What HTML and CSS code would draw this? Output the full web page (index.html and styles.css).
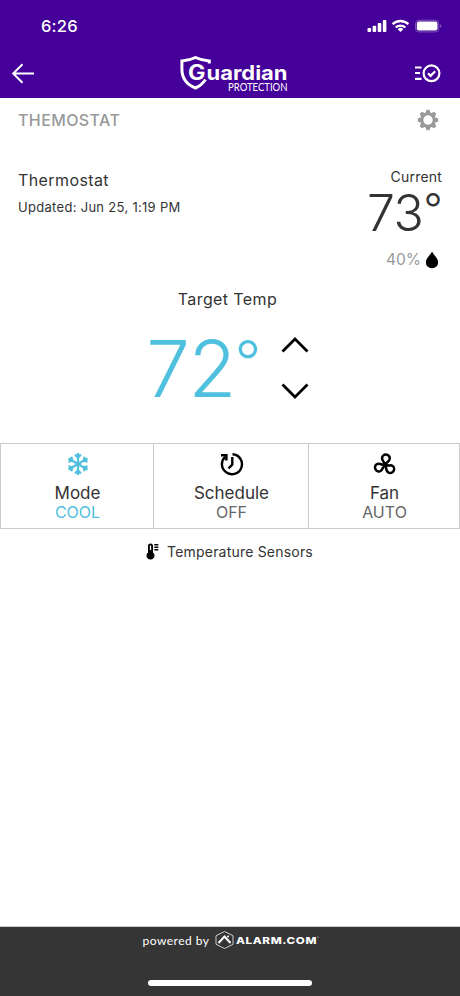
FILE: index.html
```
<!DOCTYPE html>
<html lang="en">

<head>
    <meta charset="UTF-8">
    <meta name="viewport" content="width=device-width, initial-scale=1.0">
    <title>Thermostat</title>
    <link rel="stylesheet" href="styles.css">
</head>

<body>
    <header>
        <div class="status">
            <span class="time">6:26</span>
            <svg class="signals" width="75" height="16" viewBox="0 0 75 16" fill="#fff">
                <rect x="0.5" y="10" width="3.6" height="4" rx="1"/>
                <rect x="5.6" y="7.8" width="3.6" height="6.2" rx="1"/>
                <rect x="10.7" y="5" width="3.6" height="9" rx="1"/>
                <rect x="15.8" y="2" width="3.6" height="12" rx="1"/>
                <g fill="none" stroke="#fff" stroke-width="2.3">
                    <path d="M25.6 6.2a11.4 11.4 0 0 1 15.8 0"/>
                    <path d="M28.6 9.5a7.2 7.2 0 0 1 9.8 0"/>
                </g>
                <path d="M33.5 14l-2.8-2.8a4 4 0 0 1 5.6 0z"/>
                <rect x="48.5" y="2.2" width="23.3" height="11.7" rx="3.5" fill="none" stroke="#7f55bb"/>
                <rect x="49.8" y="3.6" width="20.7" height="8.9" rx="2.2"/>
                <path d="M73 6.2c1.8.6 1.8 3.2 0 3.8z" fill="#7f55bb"/>
            </svg>
        </div>
        <nav>
            <svg width="24" height="24" viewBox="0 0 24 24" fill="none" stroke="#fff" stroke-width="2">
                <path d="M23 12.5H2M11.5 3.2L2.2 12.5l9.3 9.3"/>
            </svg>
            <svg class="logo" width="110" height="38" viewBox="0 0 110 38">
                <path d="M30.300 9.500V7Q22.500 6.400 16.500 3.500Q10.500 6.400 2.900 7V15C2.900 24 7.500 30.500 16.500 34Q22.500 31.500 26.500 25.500" fill="none" stroke="#fff" stroke-width="3"/>
                <text class="logo-g" x="9" y="25.500" textLength="17.500" lengthAdjust="spacingAndGlyphs">G</text>
                <text class="logo-name" x="27.500" y="25.500" textLength="81" lengthAdjust="spacingAndGlyphs">uardian</text>
                <text class="logo-sub" x="49" y="36.500" textLength="59.500" lengthAdjust="spacingAndGlyphs">PROTECTION</text>
            </svg>
            <svg width="26" height="20" viewBox="0 0 26 20" fill="none" stroke="#fff" stroke-width="2.200">
                <path d="M0 4.500h6.500M0 10h5M0 15.800h6.500"/>
                <circle cx="16.500" cy="10.300" r="7.900"/>
                <path d="M13 10.300l2.600 2.600 4.600-4.600"/>
            </svg>
        </nav>
    </header>

    <main>
        <div class="title-row">
            <h1>THEMOSTAT</h1>
            <svg width="22" height="22" viewBox="-11 -11 22 22">
                <g fill="#999">
                    <g id="teeth">
                        <path id="tooth" d="M-2.600-7L-1.400-10.200H1.400L2.600-7V7L1.400 10.200H-1.400L-2.600 7z"/>
                        <use href="#tooth" transform="rotate(45)"/>
                    </g>
                    <use href="#teeth" transform="rotate(90)"/>
                    <circle r="7.800"/>
                </g>
                <circle r="4.700" fill="#fff"/>
            </svg>
        </div>

        <section class="summary">
            <div class="device">
                <h2>Thermostat</h2>
                <p>Updated: Jun 25, 1:19 PM</p>
            </div>
            <div class="current">
                <div class="label">Current</div>
                <div class="degrees">73<span class="deg">°</span></div>
                <div class="humidity">
                    <span>40%</span>
                    <svg width="14" height="18" viewBox="0 0 14 18">
                        <path d="M7 .5C8.500 4 13.200 7.200 13.200 11.300a6.200 6 0 0 1-12.400 0C.8 7.200 5.500 4 7 .5z"/>
                    </svg>
                </div>
            </div>
        </section>

        <section class="target">
            <h2>Target Temp</h2>
            <div class="setpoint">
                <span class="value">72<span class="deg">°</span></span>
                <svg width="28" height="64" viewBox="0 0 28 64" fill="none" stroke="#000" stroke-width="2.800">
                    <path d="M1.500 15.500L14 3l12.500 12.500M1.500 48.500L14 61l12.500-12.500"/>
                </svg>
            </div>
        </section>

        <section class="controls">
            <div class="control cool">
                <svg width="24" height="24" viewBox="-12 -12 24 24" fill="none" stroke="#4fc0de" stroke-width="2.200">
                    <g id="arms">
                        <path id="arm" d="M0 0V-11M-2.900-9.400L0-6.500 2.900-9.400"/>
                        <use href="#arm" transform="rotate(60)"/>
                        <use href="#arm" transform="rotate(120)"/>
                    </g>
                    <use href="#arms" transform="rotate(180)"/>
                </svg>
                <h3>Mode</h3>
                <p>COOL</p>
            </div>
            <div class="control">
                <svg width="24" height="24" viewBox="0 0 24 24" fill="none" stroke="#000" stroke-width="2.400">
                    <path d="M12.500 2.200a10 10 0 1 1-7.300 2.600"/>
                    <path d="M1 3.200h5.400v5.400M12.300 5v7.500l-3.800 3.800"/>
                </svg>
                <h3>Schedule</h3>
                <p>OFF</p>
            </div>
            <div class="control">
                <svg width="24" height="24" viewBox="-12 -12 24 24" fill="none" stroke="#000" stroke-width="2.500">
                    <path id="blade" d="M-.5 1C1.500-1.500 4.800-2.600 4.800-5.600a3.900 3.700 0 0 0-7.800-.2c0 2.600 2.600 3 2.500 6.800z"/>
                    <use href="#blade" transform="rotate(120 0 1)"/>
                    <use href="#blade" transform="rotate(240 0 1)"/>
                </svg>
                <h3>Fan</h3>
                <p>AUTO</p>
            </div>
        </section>

        <div class="sensors">
            <svg width="13" height="18" viewBox="0 0 13 18">
                <path d="M2 4a2.500 2.500 0 0 1 5 0v6.500a4 4 0 1 1-5 0z"/>
                <path d="M4.500 3.500V8" stroke="#fff" stroke-width="1.300"/>
                <path d="M8.300 2.800h4M8.300 5.300h4M8.300 7.800h4" stroke="#000" stroke-width="1.500"/>
            </svg>
            <span>Temperature Sensors</span>
        </div>
    </main>

    <footer>
        <div class="powered">
            <span>powered by</span>
            <svg width="106" height="20" viewBox="0 0 106 20">
                <path d="M10.500 1.500l8.500 4.200v8.600l-8.500 4.200-8.500-4.200V5.700z" fill="none" stroke="#ccc"/>
                <path d="M4.500 13l6-6.500 6 6.500" fill="none" stroke="#fff" stroke-width="2"/>
                <circle cx="14" cy="6.600" r="1" fill="#fff"/>
                <text class="alarm" x="22" y="13.500" textLength="81" lengthAdjust="spacingAndGlyphs">ALARM.COM</text>
                <circle cx="104" cy="7" r=".6" fill="#ccc"/>
            </svg>
        </div>
        <div class="home-bar"></div>
    </footer>
</body>

</html>
```
FILE: styles.css
```
html,
body {
    margin: 0;
    padding: 0;
    height: 100%;
}

body {
    display: flex;
    flex-direction: column;
    background-color: #fff;
    color: #333;
    font-family: Inter, "Liberation Sans", sans-serif;
}

h1,
h2,
h3,
p {
    margin: 0;
    font-weight: normal;
}

svg {
    display: block;
    flex: none;
}

header {
    height: 98px;
    background-color: #440099;
    color: #fff;
}

.status {
    display: flex;
    justify-content: space-between;
    align-items: center;
    height: 52px;
    padding: 0 18px 0 41px;
}

.time {
    font-size: 16.5px;
    font-weight: 500;
    line-height: 20px;
    letter-spacing: 0.2px;
}

nav {
    display: flex;
    justify-content: space-between;
    align-items: center;
    height: 42px;
    padding: 0 19px 0 11px;
}

.logo {
    margin-left: 17px;
    overflow: visible;
}

.logo text {
    fill: #fff;
    font-family: Inter, sans-serif;
}

.logo .logo-g {
    font-size: 21px;
    font-weight: 700;
}

.logo .logo-name {
    font-size: 20px;
    font-weight: 700;
}

.logo .logo-sub {
    font-family: Lato, sans-serif;
    font-size: 10.5px;
}

main {
    flex: 1;
}

.title-row {
    display: flex;
    justify-content: space-between;
    align-items: center;
    height: 44px;
    padding: 0 21px 0 18px;
}

h1 {
    color: #999;
    font-size: 16px;
    font-weight: 500;
    letter-spacing: 0.4px;
}

.summary {
    display: flex;
    justify-content: space-between;
    height: 138px;
    padding: 0 18px;
}

.device {
    padding-top: 28px;
}

.device h2,
.target h2 {
    font-size: 16px;
    line-height: 20px;
    letter-spacing: 0.4px;
}

.device p {
    margin-top: 8px;
    font-size: 13px;
    line-height: 18px;
    letter-spacing: 0.3px;
}

.current {
    padding-top: 25px;
    text-align: right;
}

.current .label {
    font-size: 14px;
    line-height: 20px;
    letter-spacing: 0.2px;
}

.degrees {
    display: flex;
    justify-content: flex-end;
    height: 54px;
    font-size: 50px;
    font-weight: 300;
    line-height: 52px;
    letter-spacing: -0.5px;
}

.degrees .deg {
    font-size: 42px;
    line-height: 44px;
}

.humidity {
    display: flex;
    justify-content: flex-end;
    align-items: center;
    gap: 4px;
    margin-top: 9px;
    padding-right: 3px;
    color: #999;
    font-size: 15.5px;
    line-height: 20px;
}

.target {
    height: 163px;
    padding-top: 9px;
    box-sizing: border-box;
    text-align: center;
}

.target h2 {
    padding-right: 5px;
}

.setpoint {
    display: flex;
    justify-content: center;
    align-items: center;
    gap: 21px;
    height: 80px;
    margin-top: 19px;
    padding-right: 5px;
}

.value {
    display: flex;
    color: #4fc0de;
    font-size: 78px;
    font-weight: 300;
    line-height: 83px;
    letter-spacing: -1.5px;
}

.value .deg {
    font-size: 58px;
    line-height: 69px;
}

.controls {
    display: grid;
    grid-template-columns: 152px 154px 150px;
    gap: 1px;
    height: 84px;
    padding: 1px;
    background-color: #ccc;
}

.control {
    display: flex;
    flex-direction: column;
    align-items: center;
    padding: 8px 0 0 1px;
    background-color: #fff;
}

.control h3 {
    margin-top: 7px;
    font-size: 17px;
    line-height: 20px;
}

.control p {
    color: #666;
    font-size: 16px;
    line-height: 18px;
}

.control.cool p {
    color: #4fc0de;
}

.sensors {
    display: flex;
    justify-content: center;
    align-items: center;
    gap: 8px;
    height: 44px;
    padding-right: 1px;
    font-size: 14px;
    letter-spacing: 0.2px;
}

footer {
    height: 69px;
    border-top: 1px solid #ccc;
    background-color: #353535;
    color: #fff;
}

.powered {
    display: flex;
    justify-content: center;
    align-items: center;
    gap: 4px;
    height: 26px;
    padding-left: 2px;
    font-family: Lato, sans-serif;
    font-size: 12px;
    letter-spacing: 0.5px;
}

.alarm {
    fill: #fff;
    font-family: Inter, sans-serif;
    font-size: 9.5px;
    font-weight: 800;
}

.home-bar {
    width: 164px;
    height: 6px;
    margin: 27px auto 0;
    border-radius: 3px;
    background-color: #fff;
}
```
